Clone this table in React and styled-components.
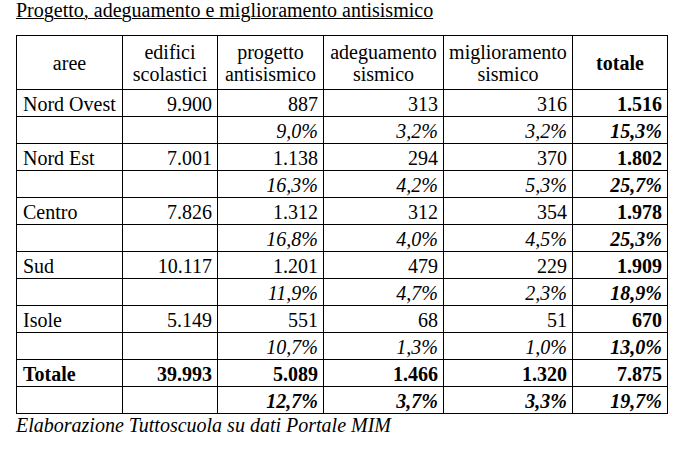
import React from 'react';
import styled, { createGlobalStyle } from 'styled-components';

const GlobalStyle = createGlobalStyle`
  html, body {
    margin: 0;
    padding: 0;
    background: #fff;
  }
`;

const StyledPage = styled.div`
  padding: 0 0 0 16px;
  font-family: 'Liberation Serif', 'Times New Roman', serif;
  font-size: 20px;
  color: #000;
`;

const StyledTitle = styled.div`
  line-height: 20px;
  text-decoration: underline;
  text-decoration-thickness: 1px;
  margin-bottom: 15px;
`;

const StyledTable = styled.table`
  width: 651px;
  table-layout: fixed;
  border-collapse: collapse;
  font-family: 'Liberation Serif', 'Times New Roman', serif;
  font-size: 20px;
  color: #000;
`;

const StyledHeadCell = styled.th`
  height: 53px;
  padding: 0 2px;
  border: 1px solid #000;
  font-weight: ${({ $bold }) => ($bold ? 'bold' : 'normal')};
  line-height: 22px;
  text-align: center;
  vertical-align: middle;
  white-space: nowrap;
`;

const StyledCell = styled.td`
  height: 23px;
  padding: 3px 5px 0 6px;
  border: 1px solid #000;
  line-height: 23px;
  text-align: ${({ $align }) => $align};
  font-weight: ${({ $bold }) => ($bold ? 'bold' : 'normal')};
  font-style: ${({ $italic }) => ($italic ? 'italic' : 'normal')};
  white-space: nowrap;
`;

const StyledCaption = styled.div`
  line-height: 23px;
  font-style: italic;
`;

const widths = [106, 95, 106, 120, 129, 95];

const headers = [
  ['aree'],
  ['edifici', 'scolastici'],
  ['progetto', 'antisismico'],
  ['adeguamento', 'sismico'],
  ['miglioramento', 'sismico'],
  ['totale'],
];

const areas = [
  ['Nord Ovest', '9.900', '887', '313', '316', '1.516', '9,0%', '3,2%', '3,2%', '15,3%'],
  ['Nord Est', '7.001', '1.138', '294', '370', '1.802', '16,3%', '4,2%', '5,3%', '25,7%'],
  ['Centro', '7.826', '1.312', '312', '354', '1.978', '16,8%', '4,0%', '4,5%', '25,3%'],
  ['Sud', '10.117', '1.201', '479', '229', '1.909', '11,9%', '4,7%', '2,3%', '18,9%'],
  ['Isole', '5.149', '551', '68', '51', '670', '10,7%', '1,3%', '1,0%', '13,0%'],
  ['Totale', '39.993', '5.089', '1.466', '1.320', '7.875', '12,7%', '3,7%', '3,3%', '19,7%'],
];

const App = () => (
  <StyledPage>
    <GlobalStyle />
    <StyledTitle>Progetto, adeguamento e miglioramento antisismico</StyledTitle>
    <StyledTable>
      <colgroup>
        {widths.map((w, idx) => (
          <col key={idx} style={{ width: w }} />
        ))}
      </colgroup>
      <thead>
        <tr>
          {headers.map((lines, idx) => (
            <StyledHeadCell key={idx} $bold={idx === 5}>
              {lines.map((line, i) => (
                <div key={i}>{line}</div>
              ))}
            </StyledHeadCell>
          ))}
        </tr>
      </thead>
      <tbody>
        {areas.map((row) => {
          const total = row[0] === 'Totale';
          return (
            <React.Fragment key={row[0]}>
              <tr>
                {row.slice(0, 6).map((val, idx) => (
                  <StyledCell
                    key={idx}
                    $align={idx === 0 ? 'left' : 'right'}
                    $bold={total || idx === 5}
                  >
                    {val}
                  </StyledCell>
                ))}
              </tr>
              <tr>
                <StyledCell $align="left" />
                <StyledCell $align="right" />
                {row.slice(6).map((val, idx) => (
                  <StyledCell key={idx} $align="right" $italic $bold={total || idx === 3}>
                    {val}
                  </StyledCell>
                ))}
              </tr>
            </React.Fragment>
          );
        })}
      </tbody>
    </StyledTable>
    <StyledCaption>Elaborazione Tuttoscuola su dati Portale MIM</StyledCaption>
  </StyledPage>
);

export default App;
